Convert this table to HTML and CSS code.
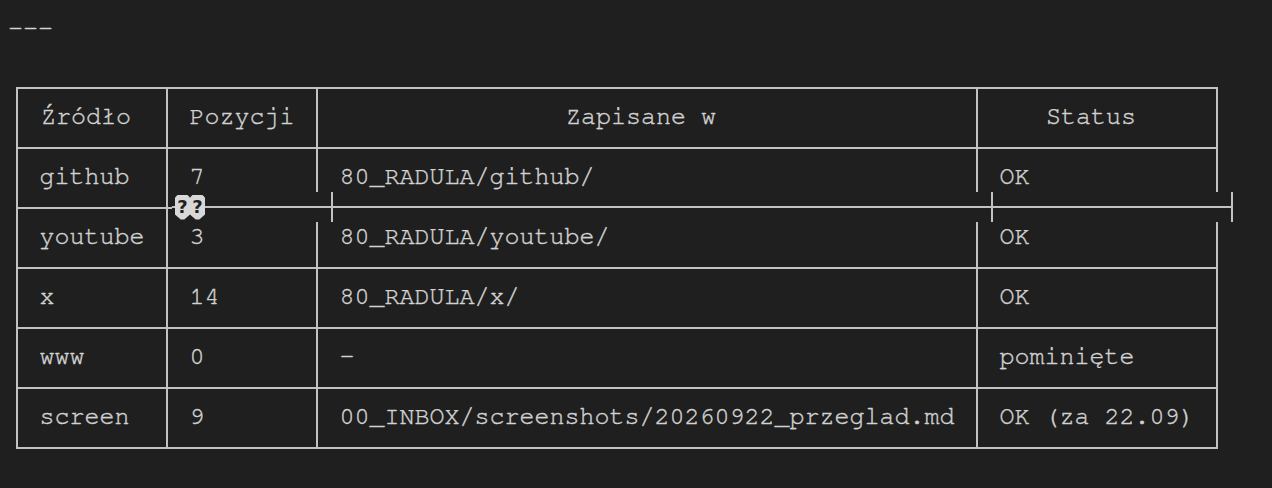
FILE: index.html
```html
<!DOCTYPE html>
<html lang="pl">
<head>
    <meta charset="UTF-8">
    <meta name="viewport" content="width=device-width, initial-scale=1.0">
    <title>Przegląd</title>
    <link rel="stylesheet" href="styles.css">
</head>
<body>

    <div class="rule">---</div>

    <div class="table-wrap">
        <table class="report">
            <thead>
                <tr>
                    <th>Źródło</th>
                    <th class="even">Pozycji</th>
                    <th>Zapisane w</th>
                    <th>Status</th>
                </tr>
            </thead>
            <tbody>
                <tr><td>github</td><td>7</td><td>80_RADULA/github/</td><td>OK</td></tr>
                <tr><td>youtube</td><td>3</td><td>80_RADULA/youtube/</td><td>OK</td></tr>
                <tr><td>x</td><td>14</td><td>80_RADULA/x/</td><td>OK</td></tr>
                <tr><td>www</td><td>0</td><td>-</td><td>pominięte</td></tr>
                <tr><td>screen</td><td>9</td><td>00_INBOX/screenshots/20260922_przeglad.md</td><td>OK (za 22.09)</td></tr>
            </tbody>
        </table>

        <!-- broken separator line drawn over the github/youtube border -->
        <div class="glitch">
            <span class="bad"><span class="mark">?</span><span class="mark">?</span></span>
            <span class="seg seg-a"></span>
            <span class="seg seg-b"></span>
            <span class="seg seg-c"></span>
        </div>
    </div>

</body>
</html>
```

FILE: styles.css
```css
body {
    margin: 8px;
    background-color: #1f1f1f;
    color: #d2d2d2;
    font-family: "FreeMono", "Nimbus Mono PS", "Courier", "Liberation Mono", monospace;
    font-size: 25px;
    line-height: 29px;
    -webkit-text-stroke: 0.4px #d2d2d2;
}

.rule {
    padding-top: 6px;
}

.table-wrap {
    position: relative;
    width: max-content;
    margin: 44px 0 0 8px;
}

.report {
    border-collapse: collapse;
}

.report th,
.report td {
    border: 2px solid #c2c2c2;
    padding: 13px 21.5px 16px;
    font-weight: normal;
    text-align: left;
    white-space: pre;
}

.report th {
    text-align: center;
    padding-left: 15.5px;
    padding-right: 27.5px;
}

.report th.even {
    padding-left: 21.5px;
    padding-right: 21.5px;
}

.glitch {
    position: absolute;
    top: 105px;
    left: 156px;
    height: 30px;
    display: flex;
    padding-left: 3px;
    background: #1f1f1f linear-gradient(to bottom, transparent 14px, #c2c2c2 14px, #c2c2c2 16px, transparent 16px);
}

.glitch .bad {
    display: flex;
    align-items: center;
}

.glitch .mark {
    width: 15px;
    height: 25px;
    background-color: #d8d8d8;
    color: #1f1f1f;
    -webkit-text-stroke: 0;
    font-family: "DejaVu Sans", sans-serif;
    font-size: 18px;
    font-weight: bold;
    line-height: 24px;
    text-align: center;
    clip-path: polygon(20% 0, 80% 0, 100% 12%, 100% 80%, 62% 100%, 38% 100%, 0 80%, 0 12%);
}

.glitch .seg {
    box-sizing: border-box;
    height: 30px;
    border-right: 2px solid #c2c2c2;
}

.glitch .seg-a {
    width: 128px;
}

.glitch .seg-b {
    width: 660px;
}

.glitch .seg-c {
    width: 240px;
}
```
